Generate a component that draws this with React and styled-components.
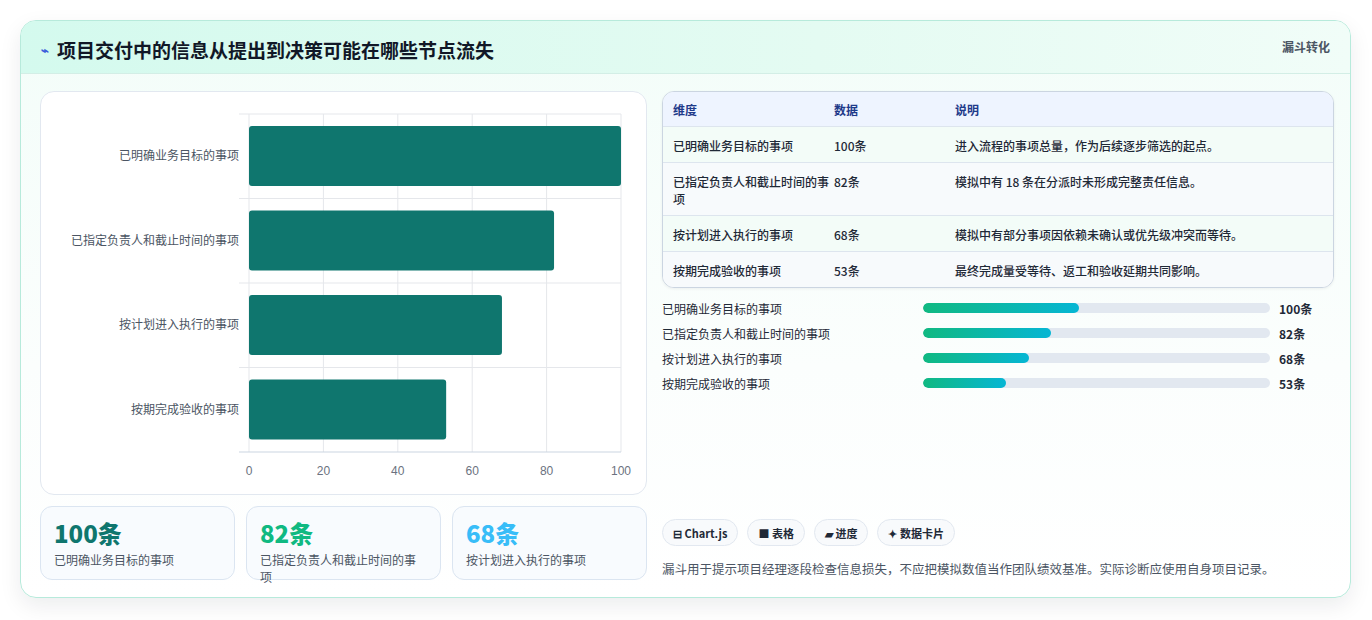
import React from "react";
import styled, { createGlobalStyle } from "styled-components";

const Global = createGlobalStyle`
  html, body { margin: 0; padding: 0; background: #fff; }
  body { font-family: "Noto Sans CJK SC", "Noto Sans", sans-serif; color: #1f2937; }
`;

const Page = styled.div`
  padding: 20px 21px 22px 20px;
`;

const Card = styled.div`
  width: 1331px;
  height: 578px;
  box-sizing: border-box;
  border: 1px solid #b7eadb;
  border-radius: 16px;
  background: linear-gradient(180deg, #f3fdf9 0%, #fbfefd 60%, #ffffff 100%);
  box-shadow: 0 8px 22px rgba(15, 23, 42, 0.08);
  overflow: hidden;
  display: flex;
  flex-direction: column;
`;

const Header = styled.div`
  height: 55px;
  box-sizing: border-box;
  display: flex;
  justify-content: space-between;
  align-items: flex-start;
  padding: 15px 20px 0 20px;
  background: linear-gradient(90deg, #d4faee 0%, #e4fbf2 60%, #f1fdf8 100%);
  border-bottom: 1px solid #d3eee6;
`;

const Title = styled.h1`
  margin: 0;
  font-size: 19px;
  font-weight: 700;
  color: #111827;
  display: flex;
  align-items: center;
  gap: 8px;
  span { color: #3b5bdb; font-size: 13px; }
`;

const Tag = styled.div`
  font-size: 12px;
  font-weight: 700;
  color: #4b5563;
  padding-top: 2px;
`;

const Body = styled.div`
  flex: 1;
  display: grid;
  grid-template-columns: 607px 672px;
  gap: 15px;
  padding: 17px 17px 17px 19px;
`;

const Left = styled.div`
  display: flex;
  flex-direction: column;
  gap: 11px;
`;

const ChartPanel = styled.div`
  height: 404px;
  box-sizing: border-box;
  border: 1px solid #e2e8f0;
  border-radius: 14px;
  background: #fff;
`;

const Stats = styled.div`
  display: grid;
  grid-template-columns: repeat(3, 1fr);
  gap: 11px;
`;

const Stat = styled.div`
  height: 74px;
  box-sizing: border-box;
  border: 1px solid #dbe5f1;
  border-radius: 12px;
  background: #f8fbfe;
  padding: 10px 13px;
`;

const StatValue = styled.div`
  font-size: 24px;
  font-weight: 800;
  line-height: 32px;
  color: ${(p) => p.$color};
`;

const StatLabel = styled.div`
  font-size: 12px;
  color: #4b5563;
  margin-top: 2px;
`;

const Right = styled.div`
  display: flex;
  flex-direction: column;
`;

const Table = styled.div`
  border: 1px solid #cbd5e1;
  border-radius: 12px;
  overflow: hidden;
  background: #fff;
  font-size: 12px;
  box-shadow: 0 1px 3px rgba(15, 23, 42, 0.06);
`;

const Row = styled.div`
  display: grid;
  grid-template-columns: 161px 121px 1fr;
  padding: 0 10px;
  align-items: start;
  min-height: ${(p) => (p.$head ? 32 : 35)}px;
  box-sizing: border-box;
  padding-top: ${(p) => (p.$head ? 9 : 10)}px;
  padding-bottom: 8px;
  background: ${(p) => (p.$head ? "#eef4ff" : p.$alt ? "#f7fafc" : "#f3fcf8")};
  color: ${(p) => (p.$head ? "#1e3a8a" : "#1f2937")};
  font-weight: ${(p) => (p.$head ? 700 : 500)};
  border-top: ${(p) => (p.$first ? "none" : "1px solid #dde5ee")};
  line-height: 17px;
`;

const Bars = styled.div`
  display: flex;
  flex-direction: column;
  gap: 7px;
  margin-top: 11px;
`;

const BarRow = styled.div`
  display: grid;
  grid-template-columns: 252px 347px 1fr;
  gap: 0 9px;
  align-items: center;
  font-size: 12px;
  height: 18px;
  color: #1f2937;
  b { font-weight: 700; }
`;

const Track = styled.div`
  height: 10px;
  border-radius: 5px;
  background: #e2e8f0;
  overflow: hidden;
`;

const Fill = styled.div`
  height: 100%;
  border-radius: 5px;
  background: linear-gradient(90deg, #10b981, #06b6d4);
`;

const Chips = styled.div`
  margin-top: auto;
  display: flex;
  gap: 9px;
`;

const Chip = styled.div`
  height: 27px;
  box-sizing: border-box;
  padding: 0 10px;
  border: 1px solid #e2e8f0;
  border-radius: 14px;
  background: #f8fafc;
  font-size: 11px;
  font-weight: 700;
  color: #1f2937;
  display: flex;
  align-items: center;
  gap: 3px;
`;

const Note = styled.p`
  margin: 13px 0 2px;
  font-size: 12.5px;
  color: #4b5563;
`;

const items = [
  { name: "已明确业务目标的事项", v: 100, desc: "进入流程的事项总量，作为后续逐步筛选的起点。" },
  { name: "已指定负责人和截止时间的事项", v: 82, desc: "模拟中有 18 条在分派时未形成完整责任信息。" },
  { name: "按计划进入执行的事项", v: 68, desc: "模拟中有部分事项因依赖未确认或优先级冲突而等待。" },
  { name: "按期完成验收的事项", v: 53, desc: "最终完成量受等待、返工和验收延期共同影响。" },
];

const Chart = () => {
  const x0 = 208, w = 372, y0 = 22, band = 84.5;
  return (
    <svg width="605" height="402" style={{ display: "block" }}>
      {[0, 20, 40, 60, 80, 100].map((t) => {
        const x = x0 + (t / 100) * w;
        return (
          <g key={t}>
            <line x1={x} y1={y0} x2={x} y2={y0 + 4 * band} stroke="#e5e7eb" />
            <text x={x} y={y0 + 4 * band + 23} textAnchor="middle" fontSize="12" fill="#6b7280" fontFamily="Liberation Sans, sans-serif">{t}</text>
          </g>
        );
      })}
      {[0, 1, 2, 3, 4].map((i) => (
        <line key={i} x1={x0 - 10} x2={x0 + w} y1={y0 + i * band} y2={y0 + i * band} stroke={i === 4 ? "#cbd5e1" : "#e5e7eb"} />
      ))}
      {items.map((it, i) => {
        const y = y0 + i * band + 12;
        return (
          <g key={it.name}>
            <rect x={x0} y={y} width={(it.v / 100) * w} height={60} rx="3" fill="#0f766e" />
            <text x={x0 - 10} y={y + 34} textAnchor="end" fontSize="12" fill="#4b5563">{it.name}</text>
          </g>
        );
      })}
    </svg>
  );
};

export default function App() {
  return (
    <Page>
      <Global />
      <Card>
        <Header>
          <Title><span>⌁</span>项目交付中的信息从提出到决策可能在哪些节点流失</Title>
          <Tag>漏斗转化</Tag>
        </Header>
        <Body>
          <Left>
            <ChartPanel><Chart /></ChartPanel>
            <Stats>
              <Stat><StatValue $color="#0f766e">100条</StatValue><StatLabel>已明确业务目标的事项</StatLabel></Stat>
              <Stat><StatValue $color="#10b981">82条</StatValue><StatLabel>已指定负责人和截止时间的事项</StatLabel></Stat>
              <Stat><StatValue $color="#38bdf8">68条</StatValue><StatLabel>按计划进入执行的事项</StatLabel></Stat>
            </Stats>
          </Left>
          <Right>
            <Table>
              <Row $head $first><div>维度</div><div>数据</div><div>说明</div></Row>
              {items.map((it, i) => (
                <Row key={it.name} $alt={i % 2 === 1}>
                  <div>{it.name}</div><div>{it.v}条</div><div>{it.desc}</div>
                </Row>
              ))}
            </Table>
            <Bars>
              {items.map((it) => (
                <BarRow key={it.name}>
                  <span>{it.name}</span>
                  <Track><Fill style={{ width: `${it.v * 0.45}%` }} /></Track>
                  <b>{it.v}条</b>
                </BarRow>
              ))}
            </Bars>
            <Chips>
              <Chip>⊟ Chart.js</Chip>
              <Chip>■ 表格</Chip>
              <Chip>▰ 进度</Chip>
              <Chip>✦ 数据卡片</Chip>
            </Chips>
            <Note>漏斗用于提示项目经理逐段检查信息损失，不应把模拟数值当作团队绩效基准。实际诊断应使用自身项目记录。</Note>
          </Right>
        </Body>
      </Card>
    </Page>
  );
}
